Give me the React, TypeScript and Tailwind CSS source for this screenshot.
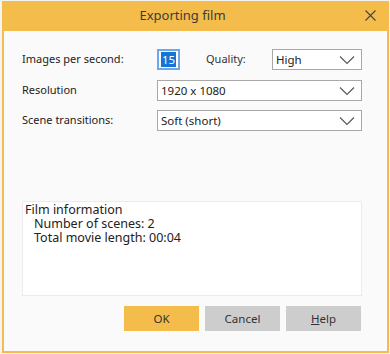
import React from "react";

const Chevron = () => (
  <svg width="16" height="10" viewBox="0 0 16 10" className="absolute right-[6px] top-1/2 -translate-y-1/2">
    <path d="M1 1.5 L8 8.5 L15 1.5" fill="none" stroke="#555" strokeWidth="1.1" />
  </svg>
);

const Select = ({ value, className }: { value: string; className: string }) => (
  <div className={`relative h-[21px] border border-[#a8a8a8] bg-white flex items-center pl-[3px] text-[11.5px] text-[#222] ${className}`}>
    <span>{value}</span>
    <Chevron />
  </div>
);

export default function App() {
  return (
    <div
      className="w-[390px] h-[354px] bg-[#f3f3f3] pt-[1px] pl-[2px] text-[11px]"
      style={{ fontFamily: '"Noto Sans", "Open Sans", sans-serif' }}
    >
      <div className="w-[387px] h-[352px] bg-[#f4bd4b] flex flex-col pb-[2px] px-[2px]">
        <div className="h-[30px] relative flex items-center justify-center pr-[26px] text-[13px] text-[#3b3b3b] shrink-0">
          <span>Exporting film</span>
          <svg width="11" height="11" viewBox="0 0 11 11" className="absolute right-[11px] top-[9px]">
            <path d="M0.5 0.5 L10.5 10.5 M10.5 0.5 L0.5 10.5" stroke="#444" strokeWidth="1.1" />
          </svg>
        </div>
        <div className="flex-1 bg-[#fafafa] pl-[18px] pr-[25px] pt-[18px] flex flex-col text-[#222]">
          <div className="flex items-center h-[21px]">
            <span className="w-[135px]">Images per second:</span>
            <div className="w-[23px] h-[21px] border-2 border-[#6ea8ec] bg-white flex items-center justify-center text-[11.5px]">
              <span className="bg-[#1574d4] text-white px-[1px] leading-[15px]">15</span>
            </div>
            <span className="ml-[26px] w-[66px] text-[#333]">Quality:</span>
            <Select value="High" className="w-[90px]" />
          </div>
          <div className="flex items-center h-[21px] mt-[10px]">
            <span className="w-[135px]">Resolution</span>
            <Select value="1920 x 1080" className="flex-1" />
          </div>
          <div className="flex items-center h-[21px] mt-[9px]">
            <span className="w-[135px]">Scene transitions:</span>
            <Select value="Soft (short)" className="flex-1" />
          </div>
          <div className="mt-[70px] h-[95px] border border-[#ebebeb] bg-white pl-[2px] pt-[1px] leading-[14px] text-[12.5px]">
            <div>Film information</div>
            <div className="pl-[9px]">Number of scenes: 2</div>
            <div className="pl-[9px]">Total movie length: 00:04</div>
          </div>
          <div className="flex justify-end gap-[6px] mt-[10px] mr-[1px] text-[11.5px]">
            <button className="w-[75px] h-[25px] bg-[#f4bd4b] text-[#333]">OK</button>
            <button className="w-[75px] h-[25px] bg-[#cdcdcd] text-[#333]">Cancel</button>
            <button className="w-[75px] h-[25px] bg-[#cdcdcd] text-[#333]">
              <span className="underline decoration-[#333]">H</span>elp
            </button>
          </div>
        </div>
      </div>
    </div>
  );
}
